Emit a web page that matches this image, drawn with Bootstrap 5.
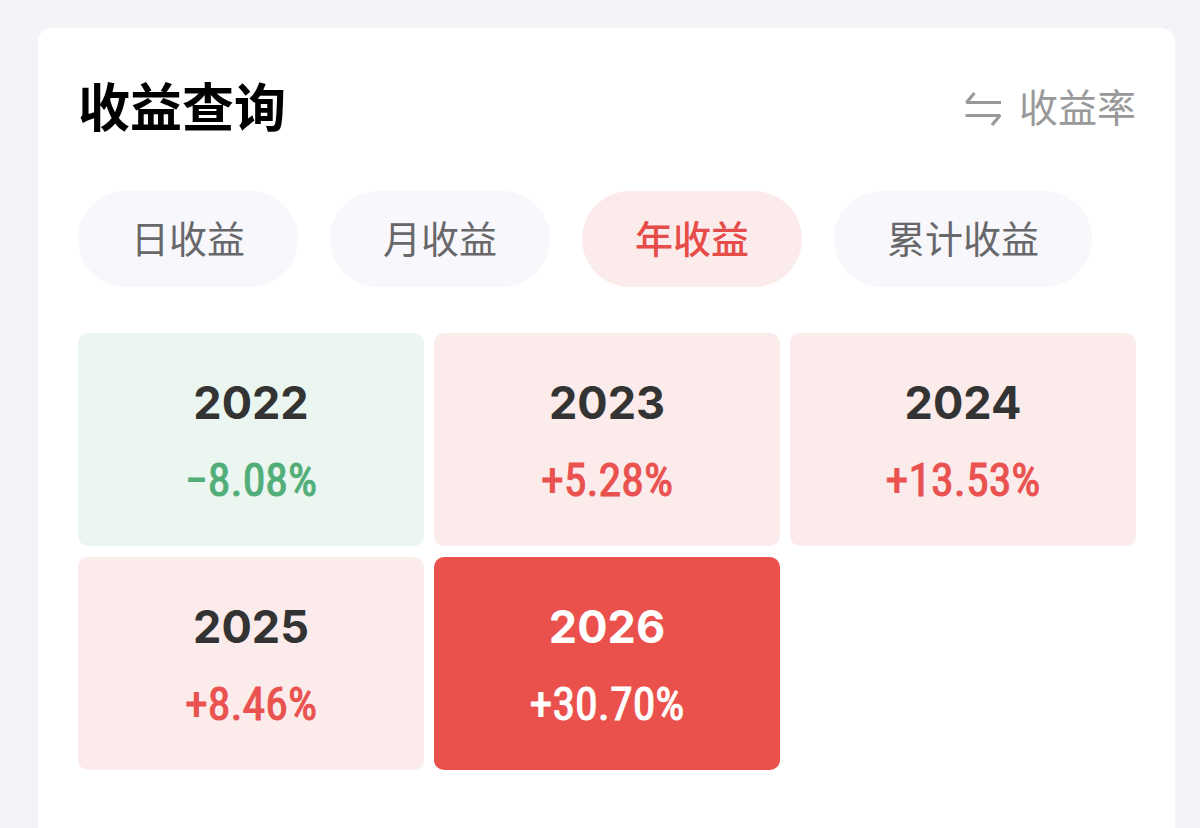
<!DOCTYPE html>
<html lang="zh-CN">
<head>
<meta charset="utf-8">
<meta name="viewport" content="width=device-width, initial-scale=1">
<title>收益查询</title>
<link rel="stylesheet" href="https://cdn.jsdelivr.net/npm/bootstrap@5.3.0/dist/css/bootstrap.min.css">
<style>
  body { background: #f3f3f8; font-family: "Noto Sans CJK SC", sans-serif; }
  .page-wrap { padding: 28px 25px 0 38px; }
  .panel { background: #fff; border-radius: 14px 14px 0 0; padding: 38px 39px 59px 40px; }
  .panel-title { font-size: 52px; line-height: 78px; font-weight: 700; color: #000; }
  .rate-switch { font-size: 39px; line-height: 58px; font-weight: 400; color: #999; gap: 17px; }
  .period-tabs { margin-top: 47px; gap: 32px; }
  .period-tab { height: 96px; padding: 0 53px 4px; border-radius: 48px; background: #f7f7fc; color: #68686a; font-size: 38px; line-height: 56px; white-space: nowrap; font-weight: 400; }
  .period-tab.active { background: #fcebeb; color: #e64c49; font-weight: 500; }
  .year-grid { --bs-gutter-x: 10px; --bs-gutter-y: 11px; margin-top: 35px; }
  .year-tile { height: 213px; border-radius: 10px; background: #fcebeb; color: #e9524f; padding-top: 42px; }
  .year-tile h2 { font: 700 45px/56px Inter, sans-serif; color: #333; margin: 0 0 21px; }
  .year-tile p { font: 400 46px/56px "Roboto Condensed", Roboto, sans-serif; -webkit-text-stroke: 1px currentColor; margin: 0; }
  .year-tile.loss { background: #ebf6f0; color: #52ae79; }
  .year-tile.selected { background: #eb514c; color: #fff; }
  .year-tile.selected h2 { color: #fff; }
</style>
</head>
<body>
<div class="page-wrap">
  <main class="panel">
    <header class="d-flex justify-content-between align-items-center">
      <h1 class="panel-title m-0">收益查询</h1>
      <button type="button" class="rate-switch btn border-0 p-0 d-flex align-items-center">
        <svg width="38" height="44" viewBox="0 0 38 44" fill="none" stroke="currentColor" stroke-width="3.2" stroke-linejoin="bevel" aria-hidden="true">
          <path d="M37 19.5H2.5L10.5 10M1.500 32.500H36L28 42"/>
        </svg>
        <span>收益率</span>
      </button>
    </header>
    <nav class="period-tabs d-flex flex-wrap" aria-label="收益周期">
      <button type="button" class="period-tab border-0">日收益</button>
      <button type="button" class="period-tab border-0">月收益</button>
      <button type="button" class="period-tab border-0 active" aria-pressed="true">年收益</button>
      <button type="button" class="period-tab border-0">累计收益</button>
    </nav>
    <section class="year-grid row row-cols-3 text-center">
      <div><article class="year-tile loss"><h2>2022</h2><p>−8.08%</p></article></div>
      <div><article class="year-tile"><h2>2023</h2><p>+5.28%</p></article></div>
      <div><article class="year-tile"><h2>2024</h2><p>+13.53%</p></article></div>
      <div><article class="year-tile"><h2>2025</h2><p>+8.46%</p></article></div>
      <div><article class="year-tile selected"><h2>2026</h2><p>+30.70%</p></article></div>
    </section>
  </main>
</div>
<script src="https://cdn.jsdelivr.net/npm/bootstrap@5.3.0/dist/js/bootstrap.bundle.min.js"></script>
</body>
</html>
